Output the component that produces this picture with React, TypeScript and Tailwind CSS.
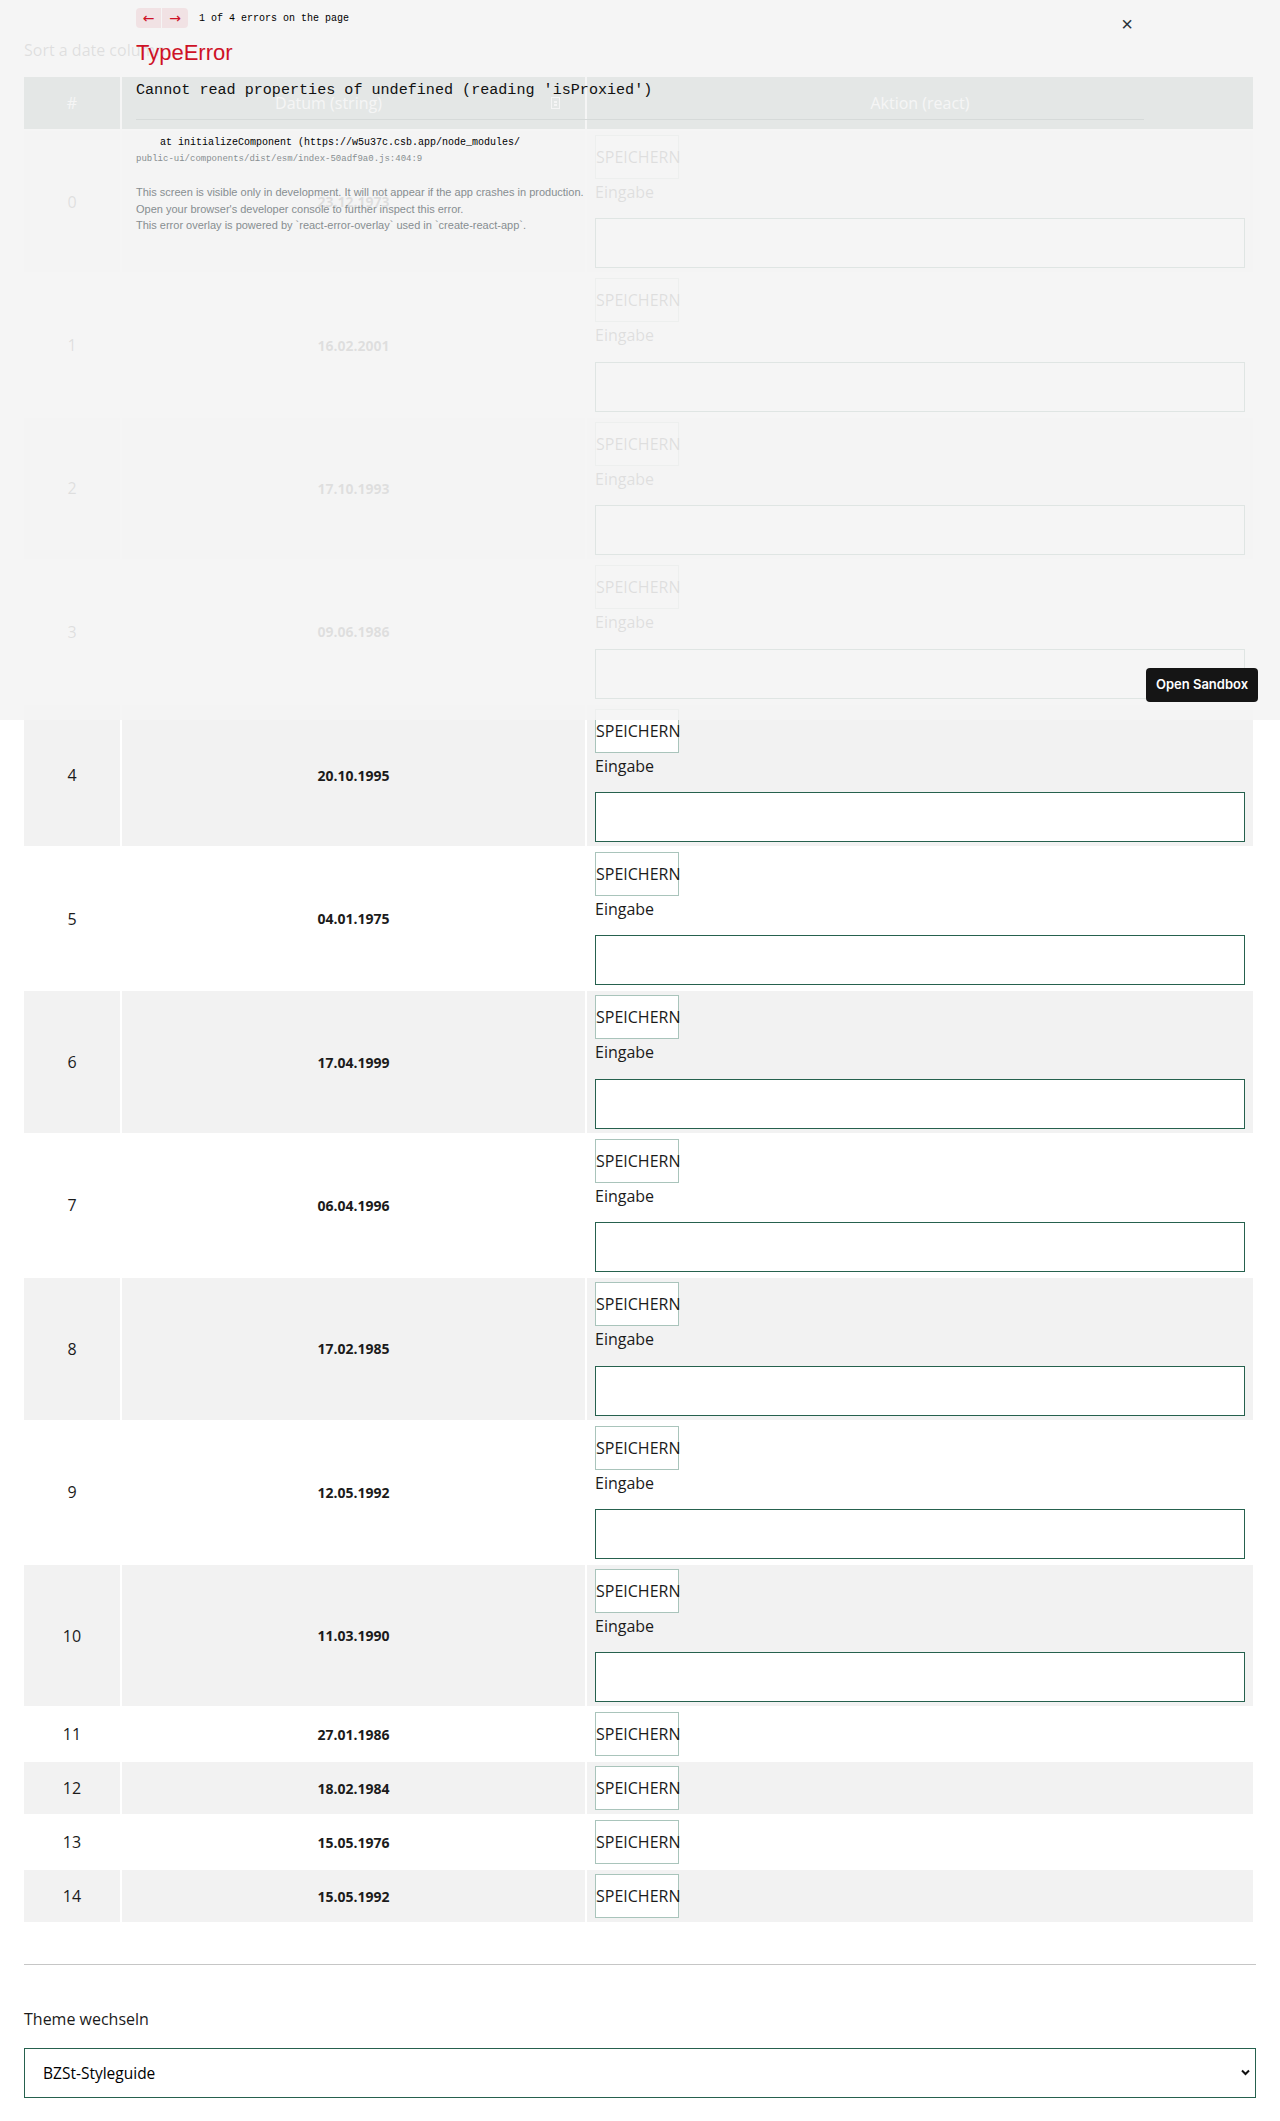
import React from 'react';

const rows: { id: number; date: string; form: boolean }[] = [
  { id: 0, date: '23.12.1973', form: true },
  { id: 1, date: '16.02.2001', form: true },
  { id: 2, date: '17.10.1993', form: true },
  { id: 3, date: '09.06.1986', form: true },
  { id: 4, date: '20.10.1995', form: true },
  { id: 5, date: '04.01.1975', form: true },
  { id: 6, date: '17.04.1999', form: true },
  { id: 7, date: '06.04.1996', form: true },
  { id: 8, date: '17.02.1985', form: true },
  { id: 9, date: '12.05.1992', form: true },
  { id: 10, date: '11.03.1990', form: true },
  { id: 11, date: '27.01.1986', form: false },
  { id: 12, date: '18.02.1984', form: false },
  { id: 13, date: '15.05.1976', form: false },
  { id: 14, date: '15.05.1992', form: false },
];

function SaveButton() {
  return (
    <button className="block w-[84px] h-[44px] bg-white border border-[#a9c4bb] text-[16px] text-[#1b1b1b] leading-none">
      SPEICHERN
    </button>
  );
}

function MissingGlyph() {
  return (
    <span className="inline-flex flex-col items-center justify-center w-[9px] h-[12px] border border-white gap-[1px]">
      <span className="block w-[3px] h-[2px] bg-white" />
      <span className="block w-[3px] h-[2px] bg-white" />
    </span>
  );
}

function ErrorOverlay() {
  return (
    <div className="absolute top-0 left-0 w-full h-[720px] bg-[rgba(244,244,244,0.9)]">
      <div className="relative w-[1024px] mx-auto p-2 font-['Liberation_Mono',monospace] text-[10px] leading-[1.5] text-black">
        {/* error navigation */}
        <div className="flex items-center h-[20px] mb-2">
          <button className="w-[25px] h-[20px] rounded-l-[4px] bg-[rgba(206,17,38,0.08)] text-[#ce1126] font-['DejaVu_Sans',sans-serif] text-[14px] leading-none">
            ←
          </button>
          <button className="ml-[1px] w-[26px] h-[20px] rounded-r-[4px] bg-[rgba(206,17,38,0.08)] text-[#ce1126] font-['DejaVu_Sans',sans-serif] text-[14px] leading-none">
            →
          </button>
          <span className="ml-[11px]">1 of 4 errors on the page</span>
        </div>
        <button className="absolute top-[12px] right-[19px] font-['Liberation_Sans',sans-serif] text-[20px] leading-[24px] text-[#293238]">
          ×
        </button>
        <div className="font-['Liberation_Sans',sans-serif] text-[22px] leading-[33px] text-[#ce1126] mb-3">
          TypeError
        </div>
        <div className="text-[15.1px] leading-[18px] pb-[20px] border-b border-[#d6dad9] text-[#111]">
          Cannot read properties of undefined (reading 'isProxied')
        </div>
        <div className="mt-[15px] leading-[16px] whitespace-pre">
          <div>{'    at initializeComponent (https://w5u37c.csb.app/node_modules/'}</div>
          <div className="text-[9px] text-[#878e91]">public-ui/components/dist/esm/index-50adf9a0.js:404:9</div>
        </div>
        <div className="mt-[17px] font-['Liberation_Sans',sans-serif] text-[11px] leading-[16.5px] text-[#878e91]">
          <div>This screen is visible only in development. It will not appear if the app crashes in production.</div>
          <div>Open your browser's developer console to further inspect this error.</div>
          <div>This error overlay is powered by `react-error-overlay` used in `create-react-app`.</div>
        </div>
      </div>
    </div>
  );
}

export default function App() {
  return (
    <div className="relative bg-white min-h-[2121px] font-['Open_Sans',sans-serif] text-[16px] text-[#1b1b1b]">
      <main className="px-6 pt-[38px] pb-[23px]">
        <p className="leading-[24px] mb-[13px]">Sort a date column</p>

        <table className="-ml-[2px] w-[1233px] table-fixed border-separate border-spacing-0.5">
          <colgroup>
            <col className="w-[96px]" />
            <col className="w-[463px]" />
            <col />
          </colgroup>
          <thead>
            <tr className="h-[52px] bg-[#4f7066] text-white">
              <th className="font-normal text-center">#</th>
              <th className="font-normal">
                <div className="flex items-center">
                  <span className="flex-1 text-center">Datum (string)</span>
                  <span className="w-[40px] mr-[10px] flex justify-center">
                    <MissingGlyph />
                  </span>
                </div>
              </th>
              <th className="font-normal text-center">Aktion (react)</th>
            </tr>
          </thead>
          <tbody>
            {rows.map((r) => (
              <tr key={r.id} className={r.id % 2 === 0 ? 'bg-[#f2f2f2]' : 'bg-white'}>
                <td className="text-center align-middle">{r.id}</td>
                <td className="text-center align-middle font-bold text-[14px]">{r.date}</td>
                <td className="px-[8px] py-[4px] align-top">
                  <SaveButton />
                  {r.form && (
                    <>
                      <label className="block leading-[26px]">Eingabe</label>
                      <input className="block w-full mt-[13.4px] h-[50px] bg-white border border-[#26614e] outline-none px-3" />
                    </>
                  )}
                </td>
              </tr>
            ))}
          </tbody>
        </table>

        <hr className="mt-[40px] border-0 border-t border-[#c6c6c6]" />

        <label className="block mt-[42px] leading-[24px]">Theme wechseln</label>
        <div className="relative mt-[17px]">
          <select className="block w-full h-[50px] appearance-none bg-white border border-[#26614e] pl-[18px] text-[15.5px] text-black outline-none">
            <option>BZSt-Styleguide</option>
          </select>
          <svg className="absolute right-[6px] top-[21px] pointer-events-none" width="9" height="7" viewBox="0 0 9 7">
            <path d="M1 1.5 L4.5 5 L8 1.5" fill="none" stroke="#111" strokeWidth="2" />
          </svg>
        </div>
      </main>

      <ErrorOverlay />

      <button className="absolute right-[22px] top-[668px] w-[112px] h-[34px] rounded-[4px] bg-[#151515] text-white font-['Inter',sans-serif] font-semibold text-[13px]">
        Open Sandbox
      </button>
    </div>
  );
}
